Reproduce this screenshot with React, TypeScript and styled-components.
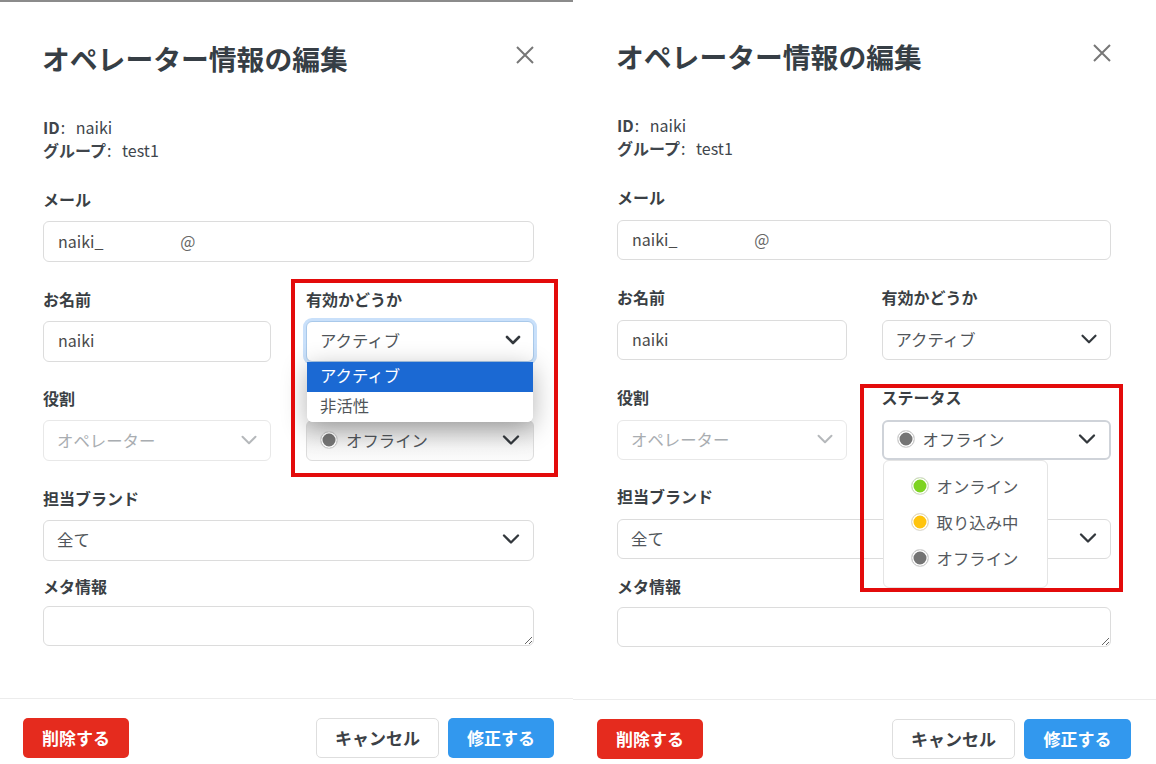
import React from "react";
import styled, { createGlobalStyle } from "styled-components";
import { ChevronDown } from "lucide-react";

const GlobalStyle = createGlobalStyle`
  html, body {
    margin: 0;
    padding: 0;
    background: #fff;
  }
  body {
    font-family: "Noto Sans CJK JP", "Noto Sans", sans-serif;
    color: #40464c;
  }
  * {
    box-sizing: border-box;
  }
`;

const Page = styled.div`
  display: flex;
  width: 1156px;
  height: 764px;
  overflow: hidden;
  background: #fff;
`;

type Metrics = {
  width: number;
  top: number;
  left: number;
  right: number;
  fieldHeight: number;
  labelGap: number;
  rowGap: number;
  metaShift: number;
};

const Panel = styled.section<{ $m: Metrics; $line?: boolean }>`
  --field-height: ${(p) => p.$m.fieldHeight}px;
  --label-gap: ${(p) => p.$m.labelGap}px;
  --row-gap: ${(p) => p.$m.rowGap}px;
  --meta-shift: ${(p) => p.$m.metaShift}px;
  position: relative;
  display: flex;
  flex-direction: column;
  flex: none;
  width: ${(p) => p.$m.width}px;
  height: 764px;
  padding: ${(p) => p.$m.top}px ${(p) => p.$m.right}px 0 ${(p) => p.$m.left}px;
  border-top: ${(p) => (p.$line ? "2px solid #8b8b8b" : "none")};
`;

const Header = styled.header`
  display: flex;
  justify-content: space-between;
  align-items: flex-start;
  height: 40px;
`;

const Title = styled.h1`
  margin: 0 0 0 -1px;
  color: #363e45;
  font-size: 27.8px;
  line-height: 36px;
  font-weight: 700;
`;

const CloseIcon = styled.svg`
  display: block;
  width: 18px;
  height: 18px;
  margin-top: 6px;
  stroke: #777;
  stroke-width: 2;
  fill: none;
`;

const Meta = styled.div`
  margin: 36px 0 26px;
  font-size: 16px;
  line-height: 23px;
  word-spacing: 7px;

  strong {
    margin-right: 1px;
    font-weight: 700;
  }
`;

const Grid = styled.div`
  display: grid;
  grid-template-columns: 1fr 1fr;
  column-gap: 35px;
  row-gap: var(--row-gap);
`;

const Field = styled.div<{ $wide?: boolean; $tight?: boolean }>`
  position: relative;
  grid-column: ${(p) => (p.$wide ? "1 / span 2" : "auto")};
  margin-top: ${(p) => (p.$tight ? "var(--meta-shift)" : "0")};
`;

const Label = styled.label<{ $tight?: boolean; $covered?: boolean }>`
  display: block;
  margin-bottom: ${(p) => (p.$tight ? "calc(var(--label-gap) - 2px)" : "var(--label-gap)")};
  color: #3a3f44;
  font-size: 16px;
  line-height: 22px;
  font-weight: 700;
  visibility: ${(p) => (p.$covered ? "hidden" : "visible")};
`;

const Input = styled.div`
  display: flex;
  align-items: center;
  height: var(--field-height);
  padding: 0 14px 2px;
  border: 1px solid #dcdcdc;
  border-radius: 6px;
  background: #fff;
  color: #4a4a4a;
  font-size: 16px;
`;

const MaskedDomain = styled.span`
  width: 15px;
  margin-left: 77px;
  overflow: hidden;
  color: #666;
  white-space: nowrap;
`;

const TextArea = styled.textarea`
  display: block;
  width: 100%;
  height: 40px;
  border: 1px solid #dcdcdc;
  border-radius: 6px;
  background: #fff;
  font-family: inherit;
`;

const selectBorder = {
  ring: "1px solid #a9c9ea",
  active: "2px solid #cfd3d9",
  disabled: "1px solid #e8e8e8",
  idle: "1px solid #dcdcdc",
};

const Select = styled.div<{ $state?: keyof typeof selectBorder; $shaded?: boolean }>`
  display: flex;
  align-items: center;
  justify-content: space-between;
  height: var(--field-height);
  padding: 0 14px 2px 13px;
  border: ${(p) => selectBorder[p.$state ?? "idle"]};
  border-radius: 6px;
  background: ${(p) => (p.$shaded ? "linear-gradient(#dcdcdc, #f6f6f6 70%, #fbfbfb)" : "#fff")};
  color: ${(p) => (p.$state === "disabled" ? "#a9adb1" : "#50555a")};
  font-size: 16.4px;
  box-shadow: ${(p) => (p.$state === "ring" ? "0 0 0 3px #c9e0fa" : "none")};

  svg {
    flex: none;
    margin-right: -6px;
    color: ${(p) => (p.$state === "disabled" ? "#b5b8bb" : "#33383d")};
  }
`;

const SelectValue = styled.span`
  display: flex;
  align-items: center;
  gap: 8px;
`;

const Dot = styled.span<{ $color: string }>`
  flex: none;
  width: 18px;
  height: 18px;
  border: 1px solid #ddd;
  border-radius: 50%;
  background: ${(p) => p.$color};
  box-shadow: inset 0 0 0 1.5px #fff;
`;

const NativeMenu = styled.ul`
  position: absolute;
  top: calc(22px + var(--label-gap) + var(--field-height));
  left: 1px;
  right: 1px;
  z-index: 2;
  margin: 0;
  padding: 0;
  overflow: hidden;
  list-style: none;
  border-radius: 0 0 6px 6px;
  background: #fff;
  box-shadow: 0 6px 26px rgba(0, 0, 0, 0.3);
`;

const NativeOption = styled.li<{ $selected?: boolean }>`
  height: 30px;
  padding-left: 13px;
  background: ${(p) => (p.$selected ? "#1b69d3" : "#fff")};
  color: ${(p) => (p.$selected ? "#fff" : "#50555a")};
  font-size: 16.4px;
  line-height: 26px;
`;

const StatusMenu = styled.ul`
  position: absolute;
  top: calc(22px + var(--label-gap) + var(--field-height));
  left: 1px;
  z-index: 2;
  width: 165px;
  margin: 0;
  padding: 7px 0 11px 27px;
  list-style: none;
  border: 1px solid #e4e4e4;
  border-radius: 6px;
  background: #fff;
`;

const StatusOption = styled.li`
  display: flex;
  align-items: center;
  gap: 8px;
  height: 36px;
  color: #55595e;
  font-size: 16.4px;
`;

const Footer = styled.footer<{ $left: number; $right: number; $top: number }>`
  position: absolute;
  left: 0;
  right: 0;
  top: ${(p) => p.$top}px;
  display: flex;
  align-items: center;
  gap: 9px;
  padding: 19px ${(p) => p.$right}px 0 ${(p) => p.$left}px;
  border-top: 1px solid #ececec;
`;

const Button = styled.button<{ $kind: "danger" | "plain" | "primary"; $width: number }>`
  width: ${(p) => p.$width}px;
  height: 40px;
  padding: 0 0 1px;
  border: 1px solid ${(p) => (p.$kind === "plain" ? "#dedede" : "transparent")};
  border-radius: 5px;
  background: ${(p) => (p.$kind === "danger" ? "#e52b1e" : p.$kind === "primary" ? "#3298ee" : "#fff")};
  color: ${(p) => (p.$kind === "plain" ? "#3c4146" : "#fff")};
  font-family: inherit;
  font-size: 17px;
  font-weight: 700;

  &:first-child {
    margin-right: auto;
  }
`;

const Callout = styled.div<{ $x: number; $y: number; $w: number; $h: number }>`
  position: absolute;
  left: ${(p) => p.$x}px;
  top: ${(p) => p.$y}px;
  z-index: 3;
  width: ${(p) => p.$w}px;
  height: ${(p) => p.$h}px;
  border: 4px solid #e30b0b;
  pointer-events: none;
`;

const offline = "#757575";

type FormProps = {
  open: "validity" | "status";
  metrics: Metrics;
  line?: boolean;
  footer: { top: number; left: number; right: number; cancel: number; confirm: number };
  callout: { x: number; y: number; w: number; h: number };
};

const OperatorForm = ({ open, metrics, line, footer, callout }: FormProps) => (
  <Panel $m={metrics} $line={line}>
    <Header>
      <Title>オペレーター情報の編集</Title>
      <CloseIcon viewBox="0 0 18 18">
        <path d="M1 1 17 17M17 1 1 17" />
      </CloseIcon>
    </Header>
    <Meta>
      <div>
        <strong>ID</strong>: naiki
      </div>
      <div>
        <strong>グループ</strong>: test1
      </div>
    </Meta>
    <Grid>
      <Field $wide>
        <Label>メール</Label>
        <Input>
          naiki_
          <MaskedDomain>@</MaskedDomain>
        </Input>
      </Field>
      <Field>
        <Label>お名前</Label>
        <Input>naiki</Input>
      </Field>
      <Field>
        <Label>有効かどうか</Label>
        <Select $state={open === "validity" ? "ring" : "idle"}>
          アクティブ
          <ChevronDown size={open === "validity" ? 24 : 26} strokeWidth={open === "validity" ? 2.6 : 2} />
        </Select>
        {open === "validity" && (
          <NativeMenu>
            <NativeOption $selected>アクティブ</NativeOption>
            <NativeOption>非活性</NativeOption>
          </NativeMenu>
        )}
      </Field>
      <Field>
        <Label>役割</Label>
        <Select $state="disabled">
          オペレーター
          <ChevronDown size={26} strokeWidth={1.8} />
        </Select>
      </Field>
      <Field>
        {/* the open menu of the field above hides this label on the left panel */}
        <Label $covered={open === "validity"}>ステータス</Label>
        <Select $state={open === "status" ? "active" : "idle"} $shaded={open === "validity"}>
          <SelectValue>
            <Dot $color={offline} />
            オフライン
          </SelectValue>
          <ChevronDown size={28} strokeWidth={2} />
        </Select>
        {open === "status" && (
          <StatusMenu>
            <StatusOption>
              <Dot $color="#7ed321" />
              オンライン
            </StatusOption>
            <StatusOption>
              <Dot $color="#ffc40c" />
              取り込み中
            </StatusOption>
            <StatusOption>
              <Dot $color={offline} />
              オフライン
            </StatusOption>
          </StatusMenu>
        )}
      </Field>
      <Field $wide>
        <Label>担当ブランド</Label>
        <Select>
          全て
          <ChevronDown size={28} strokeWidth={2} />
        </Select>
      </Field>
      <Field $wide $tight>
        <Label $tight>メタ情報</Label>
        <TextArea readOnly />
      </Field>
    </Grid>
    <Footer $top={footer.top} $left={footer.left} $right={footer.right}>
      <Button $kind="danger" $width={106}>
        削除する
      </Button>
      <Button $kind="plain" $width={footer.cancel}>
        キャンセル
      </Button>
      <Button $kind="primary" $width={footer.confirm}>
        修正する
      </Button>
    </Footer>
    <Callout $x={callout.x} $y={callout.y} $w={callout.w} $h={callout.h} />
  </Panel>
);

export default function App() {
  return (
    <Page>
      <GlobalStyle />
      <OperatorForm
        open="validity"
        metrics={{ width: 573, top: 38, left: 43, right: 39, fieldHeight: 41, labelGap: 11, rowGap: 25.5, metaShift: -11 }}
        line
        footer={{ top: 696, left: 23, right: 19, cancel: 123, confirm: 106 }}
        callout={{ x: 291, y: 277, w: 267, h: 198 }}
      />
      <OperatorForm
        open="status"
        metrics={{ width: 583, top: 38, left: 44, right: 45, fieldHeight: 40, labelGap: 12, rowGap: 25.75, metaShift: -9.75 }}
        footer={{ top: 699, left: 24, right: 25, cancel: 123, confirm: 107 }}
        callout={{ x: 287, y: 384, w: 263, h: 208 }}
      />
    </Page>
  );
}
